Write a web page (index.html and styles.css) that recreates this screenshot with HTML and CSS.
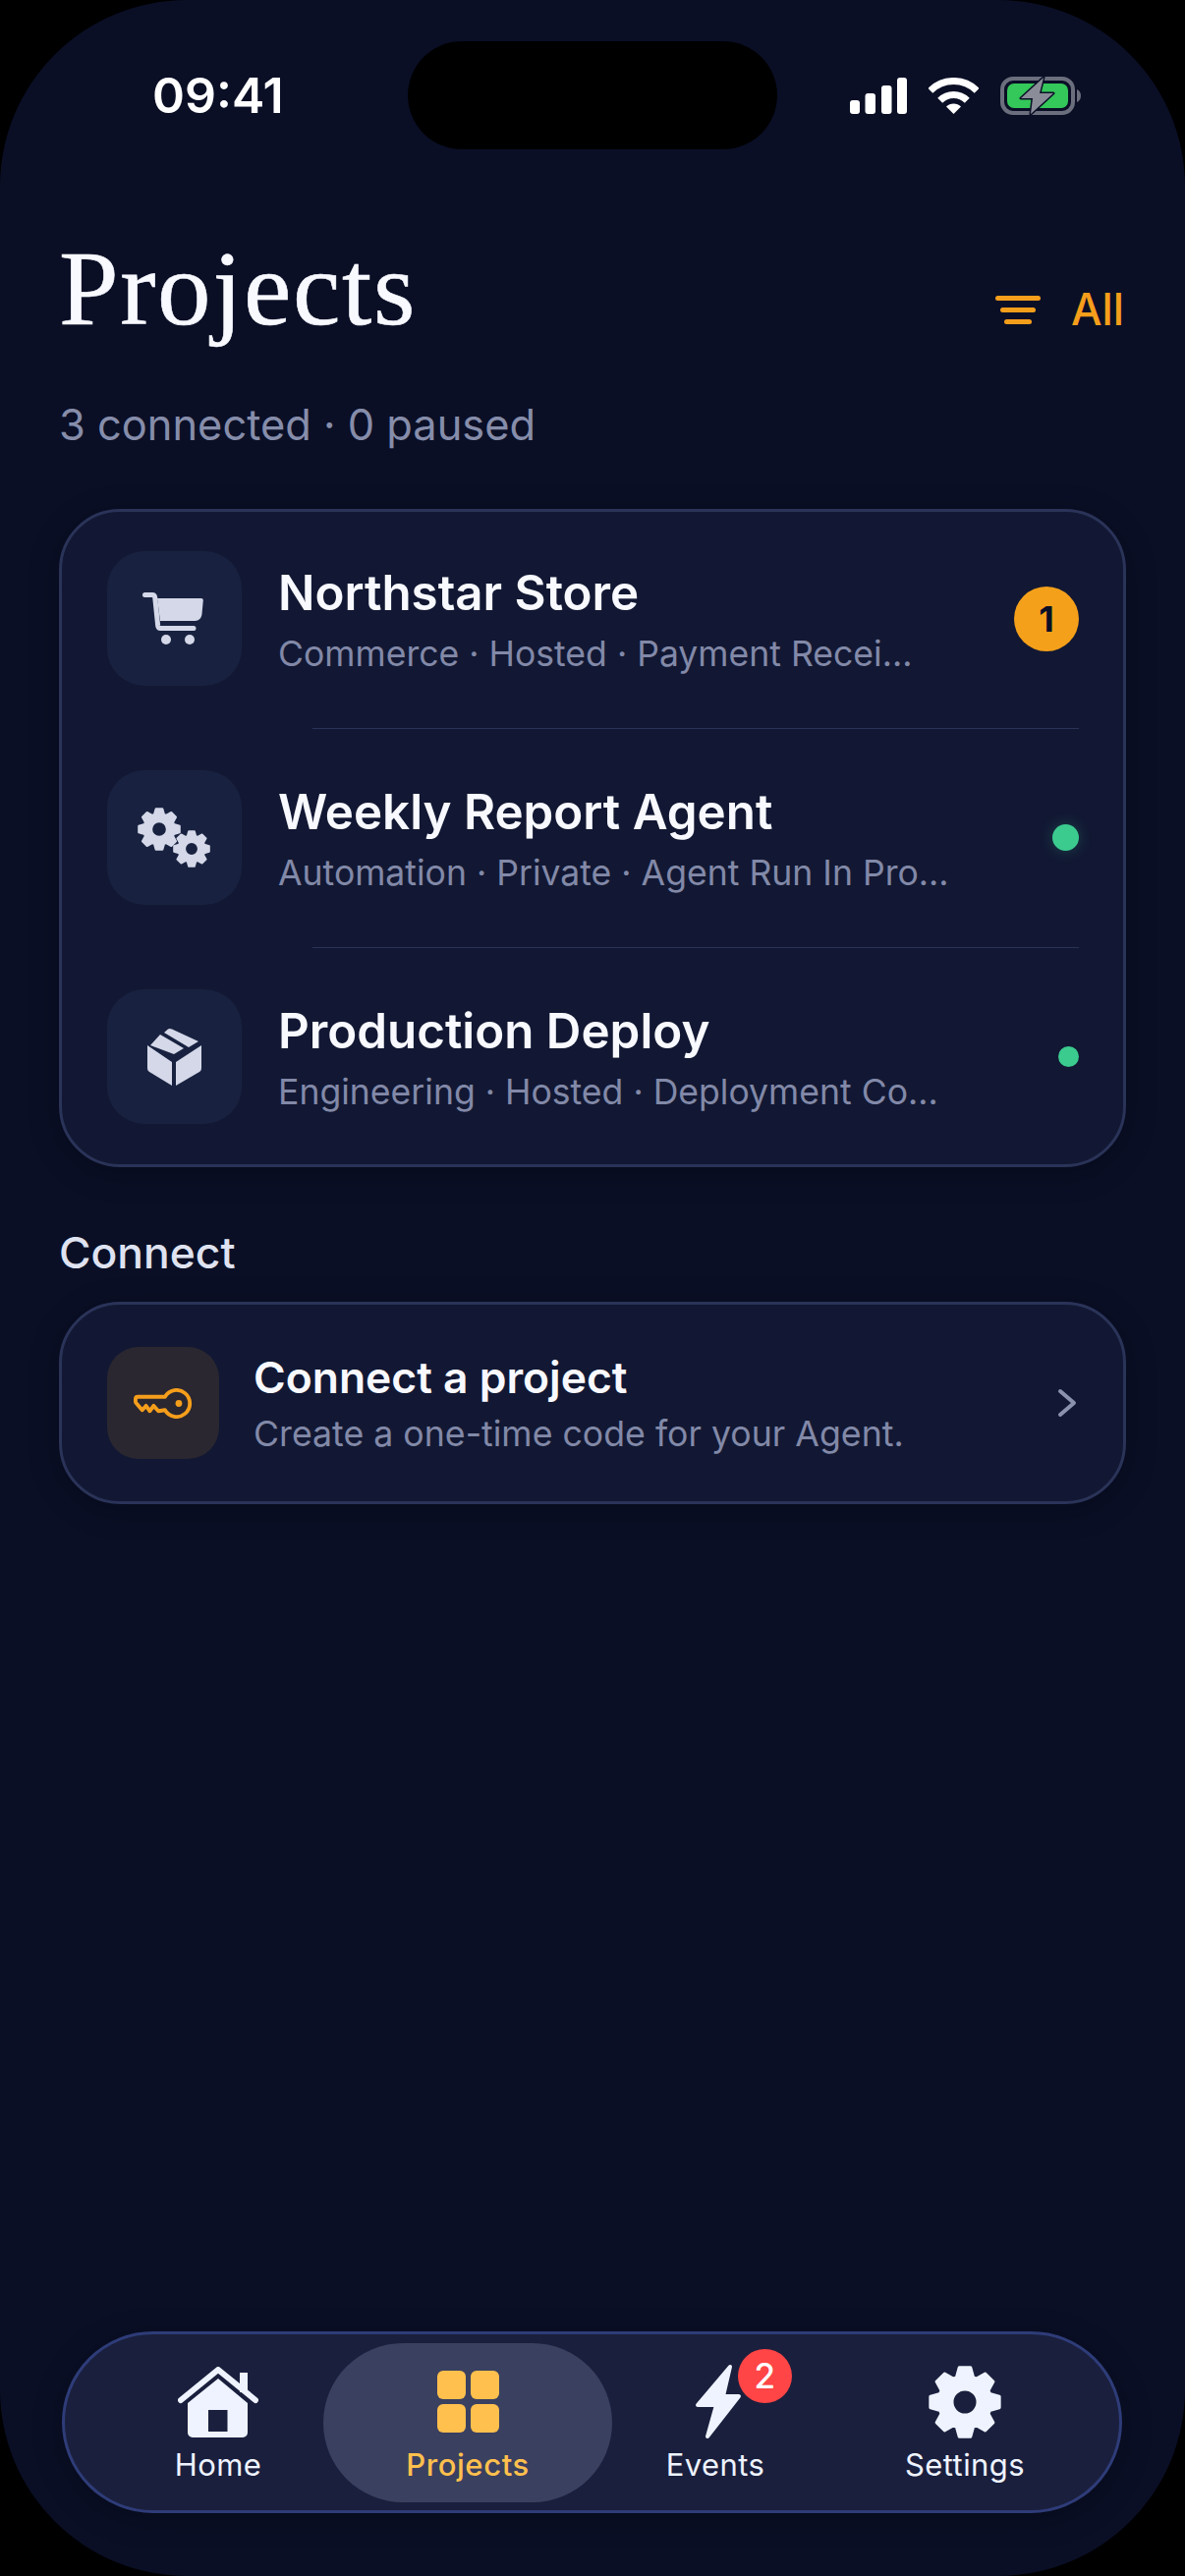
FILE: index.html
```html
<!DOCTYPE html>
<html lang="en">
<head>
    <meta charset="UTF-8">
    <meta name="viewport" content="width=device-width, initial-scale=1.0">
    <title>Projects</title>
    <link rel="stylesheet" href="styles.css">
</head>
<body>

    <svg class="defs" width="0" height="0" aria-hidden="true">
        <symbol id="gear" viewBox="-3 -3 106 106">
            <path fill="currentColor" fill-rule="evenodd" stroke="currentColor" stroke-width="5" stroke-linejoin="round" d="M38 14 42 0H58L62 14 67 16 79.7 9 91 20.3 84 33 86 38 100 42V58L86 62 84 67 91 79.7 79.7 91 67 84 62 86 58 100H42L38 86 33 84 20.3 91 9 79.7 16 67 14 62 0 58V42L14 38 16 33 9 20.3 20.3 9 33 16ZM50 31a19 19 0 1 0 0 38 19 19 0 1 0 0-38Z"/>
        </symbol>
    </svg>

    <div class="screen">

        <!-- Barra de status -->
        <div class="status-bar">
            <span class="time">09:41</span>
            <div class="island"></div>
            <div class="status-icons">
                <svg class="ic-signal" viewBox="0 0 58 37" fill="#fff">
                    <rect x="0" y="23" width="10" height="14" rx="3"/>
                    <rect x="15.5" y="16" width="10.5" height="21" rx="3"/>
                    <rect x="32" y="8" width="10.5" height="29" rx="3"/>
                    <rect x="48" y="0" width="10" height="37" rx="3"/>
                </svg>
                <svg class="ic-wifi" viewBox="0 0 51 37">
                    <path fill="none" stroke="#fff" stroke-width="7" d="M1.8 13.3A33.5 33.5 0 0 1 49.2 13.3M11.7 23.2A19.5 19.5 0 0 1 39.3 23.2"/>
                    <path fill="#fff" d="M25.5 37 18 29.5A10.6 10.6 0 0 1 33 29.5Z"/>
                </svg>
                <svg class="ic-battery" viewBox="0 0 82 39">
                    <rect x="2" y="2" width="72" height="35" rx="11" fill="none" stroke="#6b6e7c" stroke-width="4"/>
                    <rect x="7" y="7" width="62" height="25" rx="7" fill="#34c759"/>
                    <path fill="#6b6e7c" d="M78 13c2.5 1 4 3.5 4 6.5s-1.5 5.5-4 6.5Z"/>
                    <path fill="#8a8d98" stroke="#0a0f26" stroke-width="3" stroke-linejoin="round" paint-order="stroke" d="M44 1 21 22H33L31 38 54 17H40Z"/>
                </svg>
            </div>
        </div>

        <main class="content">
            <header class="page-header">
                <h1>Projects</h1>
                <div class="filter">
                    <span class="filter-icon"><i></i><i></i><i></i></span>
                    <span>All</span>
                </div>
            </header>
            <p class="summary">3 connected · 0 paused</p>

            <!-- Lista de projetos -->
            <section class="card project-list">
                <div class="row">
                    <div class="tile">
                        <svg class="ic-cart" viewBox="0 0 62 53">
                            <path fill="none" stroke="currentColor" stroke-width="5" stroke-linecap="round" d="M2.5 2.5H10c1.5 0 2.5 1 2.7 2.5l3 29c.2 1.5 1 2.5 2.5 2.5H52"/>
                            <path fill="currentColor" d="M15 6h45c1 0 2 1 1.8 2l-1.3 14c-.4 4-3 7-7 7H18Z"/>
                            <circle cx="24" cy="48" r="5" fill="currentColor"/>
                            <circle cx="48" cy="48" r="5" fill="currentColor"/>
                        </svg>
                    </div>
                    <div class="row-text">
                        <h3>Northstar Store</h3>
                        <p>Commerce · Hosted · Payment Recei...</p>
                    </div>
                    <span class="count">1</span>
                </div>
                <hr class="divider">
                <div class="row">
                    <div class="tile">
                        <div class="gears">
                            <svg class="gear-big"><use href="#gear"/></svg>
                            <svg class="gear-small"><use href="#gear"/></svg>
                        </div>
                    </div>
                    <div class="row-text">
                        <h3>Weekly Report Agent</h3>
                        <p>Automation · Private · Agent Run In Pro...</p>
                    </div>
                    <span class="dot dot-glow"></span>
                </div>
                <hr class="divider">
                <div class="row">
                    <div class="tile">
                        <svg class="ic-box" viewBox="0 0 55 59" fill="currentColor">
                            <path d="M3 18 13 7 37 21 27 27Z"/>
                            <path d="M17 5 21 1.5C22 .8 23.5 .8 25 1.5L52 14 42 20Z"/>
                            <path d="M0 18 25 35V59L2 45C.7 44 0 43 0 41Z"/>
                            <path d="M29 35 55 18V41C55 43 54.3 44 53 45L29 59Z"/>
                        </svg>
                    </div>
                    <div class="row-text">
                        <h3>Production Deploy</h3>
                        <p>Engineering · Hosted · Deployment Co...</p>
                    </div>
                    <span class="dot"></span>
                </div>
            </section>

            <h2 class="section-title">Connect</h2>
            <section class="card connect">
                <div class="tile tile-key">
                    <svg class="ic-key" viewBox="0 0 62 32" fill="none" stroke="#f59e1b" stroke-width="4" stroke-linejoin="round">
                        <path d="M33 9H4.5C3 9 2 10 2 11.5V14C2 14.8 2.3 15.5 3 16L9 23 13 18.5 17 24 21 18.5 26 24 33 23A14 14 0 1 0 33 9Z"/>
                        <circle cx="47.5" cy="16" r="3.5" fill="#f59e1b" stroke="none"/>
                    </svg>
                </div>
                <div class="connect-text">
                    <h3>Connect a project</h3>
                    <p>Create a one-time code for your Agent.</p>
                </div>
                <svg class="chevron" viewBox="0 0 20 30" fill="none" stroke="#8b92ae" stroke-width="4" stroke-linecap="round" stroke-linejoin="round">
                    <path d="M3 3 17 15 3 27"/>
                </svg>
            </section>
        </main>

        <!-- Navegação inferior -->
        <nav class="tabbar">
            <a class="tab">
                <svg class="ic-home" viewBox="0 0 82 72">
                    <path fill="currentColor" d="M63 6h8v20h-8Z"/>
                    <path fill="none" stroke="currentColor" stroke-width="6" stroke-linecap="round" stroke-linejoin="round" d="M3 34 41 3 79 34"/>
                    <path fill="currentColor" fill-rule="evenodd" d="M10 37 41 12 71 37V67a5 5 0 0 1-5 5H15a5 5 0 0 1-5-5ZM31 44V66H50.5V44Z"/>
                </svg>
                <span>Home</span>
            </a>
            <a class="tab active">
                <span class="ic-grid"><i></i><i></i><i></i><i></i></span>
                <span>Projects</span>
            </a>
            <a class="tab">
                <span class="bolt-wrap">
                    <svg class="ic-bolt" viewBox="0 0 48 77">
                        <path fill="currentColor" stroke="currentColor" stroke-width="4" stroke-linejoin="round" d="M36 3 3 42H22L13 74 45 33H29Z"/>
                    </svg>
                    <b class="tab-badge">2</b>
                </span>
                <span>Events</span>
            </a>
            <a class="tab">
                <svg class="ic-settings"><use href="#gear"/></svg>
                <span>Settings</span>
            </a>
        </nav>

    </div>

</body>
</html>
```

FILE: styles.css
```css
/* Reset */
body, h1, h2, h3, p, hr {
    margin: 0;
    padding: 0;
}

body {
    width: 1206px;
    height: 2622px;
    overflow: hidden;
    background-color: #000;
    font-family: Inter, "Noto Sans", sans-serif;
}

.defs {
    display: block;
}

.screen {
    display: flex;
    flex-direction: column;
    height: 2622px;
    border-radius: 190px;
    background-color: #0a0f26;
    overflow: hidden;
}

/* Status bar */
.status-bar {
    display: flex;
    align-items: center;
    height: 110px;
    margin-top: 42px;
}

.time {
    width: 415px;
    padding-left: 155px;
    box-sizing: border-box;
    color: #fff;
    font-size: 50px;
    font-weight: 600;
}

.island {
    width: 376px;
    height: 110px;
    border-radius: 55px;
    background-color: #000;
}

.status-icons {
    display: flex;
    align-items: center;
    gap: 22px;
    margin-left: 74px;
}

.ic-signal { width: 58px; height: 37px; }
.ic-wifi { width: 51px; height: 37px; }
.ic-battery { width: 82px; height: 39px; }

/* Content */
.content {
    flex: 1;
    padding: 0 60px;
}

.page-header {
    display: flex;
    justify-content: space-between;
    align-items: flex-end;
    margin-top: 80px;
}

h1 {
    color: #f8f9ff;
    font-family: "Liberation Serif", serif;
    font-size: 109px;
    font-weight: 400;
    letter-spacing: 1.6px;
    line-height: 124px;
    -webkit-text-stroke: 0.6px #f8f9ff;
}

.filter {
    display: flex;
    align-items: center;
    gap: 31px;
    margin-right: 2px;
    margin-bottom: 14px;
    color: #f59e1b;
    font-size: 44.5px;
    font-weight: 500;
}

.filter-icon {
    display: flex;
    flex-direction: column;
    align-items: center;
    gap: 7px;
}

.filter-icon i {
    display: block;
    width: 46px;
    height: 5px;
    border-radius: 3px;
    background-color: #f59e1b;
}

.filter-icon i:nth-child(2) { width: 36px; }
.filter-icon i:nth-child(3) { width: 28px; }

.summary {
    margin-top: 49px;
    color: #868daa;
    font-size: 43.4px;
    line-height: 54px;
}

.card {
    border: 3px solid #2a3358;
    background-color: #121833;
    box-shadow: 0 6px 30px rgba(0, 0, 0, 0.3);
    box-sizing: border-box;
}

/* Project list */
.project-list {
    margin-top: 59px;
    padding: 40px 45px 41px 46px;
    border-radius: 62px;
}

.row {
    display: flex;
    align-items: center;
    height: 137px;
}

.tile {
    display: flex;
    flex: none;
    align-items: center;
    justify-content: center;
    width: 137px;
    height: 137px;
    border-radius: 38px;
    background-color: #182240;
    color: #d4d8e8;
}

.row-text {
    flex: 1;
    margin-left: 37px;
    padding-top: 3px;
}

.row-text h3 {
    color: #f8f9ff;
    font-size: 49.3px;
    font-weight: 600;
    line-height: 60px;
}

.row-text p {
    margin-top: 10px;
    color: #8289a8;
    font-size: 35.6px;
    line-height: 46px;
}

.count {
    width: 66px;
    height: 66px;
    border-radius: 50%;
    background-color: #f5a01a;
    color: #0a0f26;
    font-size: 36px;
    font-weight: 700;
    line-height: 66px;
    text-align: center;
}

.dot {
    width: 21px;
    height: 21px;
    border-radius: 50%;
    background-color: #3bcb8f;
}

.dot-glow {
    width: 27px;
    height: 27px;
    box-shadow: 0 0 14px rgba(59, 203, 143, 0.25);
}

.divider {
    height: 1px;
    margin: 43px 0 42px 209px;
    border: none;
    background-color: #2a3358;
}

.ic-cart { width: 62px; height: 53px; margin-right: 3px; }
.ic-box { width: 55px; height: 59px; }

.gears {
    display: flex;
    align-items: flex-start;
    margin-right: 2px;
}

.gear-big { width: 44px; height: 44px; }
.gear-small { width: 38px; height: 38px; margin: 23px 0 0 -8px; }

/* Connect */
.section-title {
    margin-top: 60px;
    color: #dfe2f0;
    font-size: 44.4px;
    font-weight: 500;
    line-height: 54px;
}

.connect {
    display: flex;
    align-items: center;
    height: 206px;
    margin-top: 23px;
    padding: 0 45px 0 46px;
    border-radius: 62px;
}

.tile-key {
    width: 114px;
    height: 114px;
    border-radius: 32px;
    background-color: #2a2730;
}

.ic-key { width: 60px; height: 31px; }

.connect-text {
    flex: 1;
    margin-left: 35px;
}

.connect-text h3 {
    color: #f8f9ff;
    font-size: 44.4px;
    font-weight: 600;
    line-height: 54px;
}

.connect-text p {
    margin-top: 7px;
    color: #8289a8;
    font-size: 35.7px;
    line-height: 46px;
}

.chevron {
    width: 20px;
    height: 30px;
    margin-right: 2px;
}

/* Tab bar */
.tabbar {
    display: grid;
    grid-template-columns: 214px 294px 210px 298px;
    height: 185px;
    margin: 0 64px 64px 63px;
    padding: 9px 0 8px 49px;
    border: 3px solid #2e3c78;
    border-radius: 93px;
    background-color: #1a1f3d;
    box-shadow: 0 6px 30px rgba(0, 0, 0, 0.3);
    box-sizing: border-box;
}

.tab {
    display: flex;
    flex-direction: column;
    align-items: center;
    justify-content: flex-end;
    padding-bottom: 19px;
    color: #eef3ff;
    font-size: 31px;
    font-weight: 400;
    letter-spacing: 0.4px;
    line-height: 38px;
}

.tab.active {
    border-radius: 81px;
    background-color: #3a4060;
    color: #ffc04d;
    font-weight: 500;
    letter-spacing: 0.6px;
}

.ic-home { width: 82px; height: 72px; margin-bottom: 9px; }

.ic-grid {
    display: grid;
    grid-template-columns: 29px 29px;
    grid-auto-rows: 29px;
    gap: 5px;
    margin-bottom: 14px;
}

.ic-grid i {
    border-radius: 6px;
    background-color: #ffc04d;
}

.bolt-wrap {
    position: relative;
    display: block;
    width: 48px;
    height: 77px;
    margin: 0 0 7px 6px;
}

.ic-bolt {
    display: block;
    width: 48px;
    height: 77px;
}

.tab-badge {
    position: absolute;
    top: -15px;
    left: 44px;
    width: 55px;
    height: 55px;
    border-radius: 50%;
    background-color: #ff4545;
    color: #fff;
    font-size: 35px;
    font-weight: 500;
    line-height: 55px;
    text-align: center;
}

.ic-settings { width: 74px; height: 74px; margin-bottom: 8px; }
```
